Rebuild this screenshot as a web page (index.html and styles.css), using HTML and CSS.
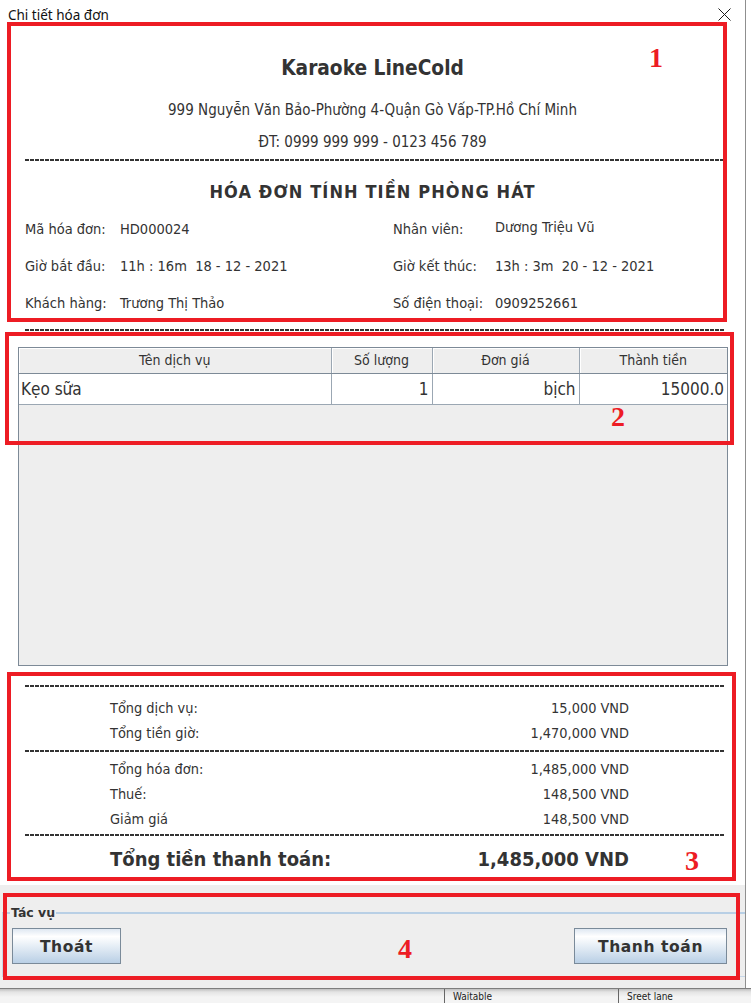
FILE: index.html
```html
<!DOCTYPE html>
<html lang="vi">
<head>
<meta charset="utf-8">
<title>Chi tiết hóa đơn</title>
<link rel="stylesheet" href="styles.css">
</head>
<body>
<div class="screen">
  <div class="window">
    <div class="titlebar">
      <span class="title">Chi tiết hóa đơn</span>
      <svg class="close" width="13" height="13" viewBox="0 0 13 13"><path d="M0.5 0.5L12.5 12.5M12.5 0.5L0.5 12.5" stroke="#1a1a1a" stroke-width="1"/></svg>
    </div>
    <div class="sheet">
      <div class="brand">Karaoke LineCold</div>
      <div class="line">999 Nguyễn Văn Bảo-Phường 4-Quận Gò Vấp-TP.Hồ Chí Minh</div>
      <div class="line">ĐT: 0999 999 999 - 0123 456 789</div>
      <div class="dash dash-head"></div>
      <div class="doc-title">HÓA ĐƠN TÍNH TIỀN PHÒNG HÁT</div>
      <div class="info">
        <span>Mã hóa đơn:</span><span>HD000024</span><span>Nhân viên:</span><span class="raised">Dương Triệu Vũ</span>
        <span>Giờ bắt đầu:</span><span>11h : 16m&nbsp; 18 - 12 - 2021</span><span>Giờ kết thúc:</span><span>13h : 3m&nbsp; 20 - 12 - 2021</span>
        <span>Khách hàng:</span><span>Trương Thị Thảo</span><span>Số điện thoại:</span><span>0909252661</span>
      </div>
      <div class="dash dash-info"></div>
      <div class="table-panel">
        <table class="grid">
          <colgroup><col class="c1"><col class="c2"><col class="c3"><col class="c4"></colgroup>
          <thead>
            <tr><th>Tên dịch vụ</th><th>Số lượng</th><th>Đơn giá</th><th>Thành tiền</th></tr>
          </thead>
          <tbody>
            <tr><td>Kẹo sữa</td><td class="num">1</td><td class="num">bịch</td><td class="num">15000.0</td></tr>
          </tbody>
        </table>
      </div>
      <div class="dash dash-sum1"></div>
      <div class="sum-group">
        <div class="sum-row"><span>Tổng dịch vụ:</span><span>15,000 VND</span></div>
        <div class="sum-row"><span>Tổng tiền giờ:</span><span>1,470,000 VND</span></div>
      </div>
      <div class="dash dash-sum2"></div>
      <div class="sum-group">
        <div class="sum-row"><span>Tổng hóa đơn:</span><span>1,485,000 VND</span></div>
        <div class="sum-row"><span>Thuế:</span><span>148,500 VND</span></div>
        <div class="sum-row"><span>Giảm giá</span><span>148,500 VND</span></div>
      </div>
      <div class="dash dash-sum3"></div>
      <div class="sum-row total"><span>Tổng tiền thanh toán:</span><span>1,485,000 VND</span></div>
    </div>
    <div class="footer">
      <fieldset class="actions">
        <legend>Tác vụ</legend>
        <button class="btn btn-exit" type="button">Thoát</button>
        <button class="btn btn-pay" type="button">Thanh toán</button>
      </fieldset>
    </div>
  </div>
  <div class="behind">
    <div class="bcell bc1"></div>
    <div class="bcell bc2">Waitable</div>
    <div class="bcell bc3">Sreet lane</div>
  </div>

  <div class="mark m1"></div>
  <div class="mark m2"></div>
  <div class="mark m3"></div>
  <div class="mark m4"></div>
  <span class="num-mark n1">1</span>
  <span class="num-mark n2">2</span>
  <span class="num-mark n3">3</span>
  <span class="num-mark n4">4</span>
</div>
</body>
</html>
```
FILE: styles.css
```css
* { box-sizing: border-box; }
html, body { margin: 0; padding: 0; background: #ffffff; }
body { width: 751px; height: 1003px; overflow: hidden; }

.screen {
  position: relative;
  width: 751px;
  height: 1003px;
  font-family: "DejaVu Sans Condensed", "DejaVu Sans", sans-serif;
  font-stretch: condensed;
  color: #333333;
}

.window {
  width: 746px;
  height: 988px;
  border-right: 1px solid #8f8f8f;
  display: flex;
  flex-direction: column;
  background: #ffffff;
}

.titlebar {
  height: 30px;
  display: flex;
  align-items: center;
  justify-content: space-between;
  padding: 0 14px 0 8px;
}
.title {
  font-family: "Noto Sans", sans-serif;
  font-stretch: normal;
  font-size: 13.5px;
  color: #111;
  margin-top: -1px;
}
.close { display: block; margin-top: -2px; }

.sheet {
  height: 855px;
  display: flex;
  flex-direction: column;
  background: #ffffff;
}

.brand {
  margin-top: 22px;
  height: 32px;
  line-height: 32px;
  text-align: center;
  font-size: 20.7px;
  font-weight: bold;
}
.line {
  height: 32px;
  line-height: 32px;
  text-align: center;
  font-size: 15px;
}
.brand + .line { margin-top: 10px; }

.dash {
  height: 2px;
  margin: 0 21px 0 25px;
  background: repeating-linear-gradient(to right, #333 0, #333 4px, transparent 4px, transparent 5px);
}
.dash-head { margin-top: 1px; }
.dash-info { margin-top: 8px; }
.dash-sum1 { margin-top: 19px; }
.dash-sum2 { margin-top: 5px; }
.dash-sum3 { margin-top: 3px; }

.doc-title {
  margin-top: 15px;
  height: 32px;
  line-height: 32px;
  text-align: center;
  font-size: 18px;
  font-weight: bold;
  letter-spacing: 1.1px;
}

.info {
  margin-top: 2px;
  padding-left: 25px;
  display: grid;
  grid-template-columns: 95px 273px 102px 1fr;
  grid-auto-rows: 37px;
  align-items: center;
  font-size: 14.5px;
}
.raised { margin-bottom: 4px; }

.table-panel {
  margin: 16px 17px 0 18px;
  height: 319px;
  border: 1px solid #7d8a97;
  background: #eeeeee;
}
.grid {
  width: 100%;
  border-collapse: collapse;
  table-layout: fixed;
}
.c1 { width: 312px; }
.c2 { width: 101px; }
.c3 { width: 147px; }
.c4 { width: auto; }
.grid th {
  height: 25px;
  padding: 0;
  font-weight: normal;
  font-size: 14px;
  text-align: center;
  background: #eeeeee;
  border-right: 1px solid #9ba7b3;
  border-bottom: 1px solid #7d8a97;
  box-shadow: inset 1px 1px 0 #ffffff;
}
.grid th:last-child { border-right: none; }
.grid td {
  height: 31px;
  padding: 0 3px 0 2px;
  font-size: 17px;
  background: #ffffff;
  border-right: 1px solid #9ba7b3;
  border-bottom: 1px solid #9ba7b3;
  white-space: nowrap;
}
.grid td:last-child { border-right: none; }
.grid td.num { text-align: right; }

.sum-group { display: flex; flex-direction: column; }
.dash-sum1 + .sum-group { margin-top: 8px; }
.dash-sum2 + .sum-group { margin-top: 4px; }
.sum-row {
  height: 25px;
  display: flex;
  align-items: center;
  justify-content: space-between;
  padding: 0 116px 0 110px;
  font-size: 14.4px;
}
.sum-row.total {
  margin-top: 8px;
  height: 30px;
  font-size: 20px;
  font-weight: bold;
}

.footer {
  flex: 1;
  background: #eeeeee;
  padding-top: 20px;
}
.actions {
  margin: 0 0 0 2px;
  padding: 7px 18px 12px 9px;
  border: 1px solid #c7d7e8;
  border-top: 2px solid #b8cfe5;
  border-right: none;
  display: flex;
  justify-content: space-between;
  align-items: flex-start;
}
.actions legend {
  padding: 0 1px;
  margin-left: -2px;
  font-family: "DejaVu Sans", sans-serif;
  font-stretch: normal;
  font-size: 12.5px;
  font-weight: bold;
  line-height: 16px;
  color: #333;
}
.btn {
  height: 36px;
  border: 1px solid #7a8a99;
  background: linear-gradient(to bottom, #dfe8f2 0%, #ffffff 22%, #e6eef6 50%, #b9cfe5 100%);
  font-family: "DejaVu Sans", sans-serif;
  font-stretch: normal;
  font-size: 15.5px;
  font-weight: bold;
  color: #333;
  letter-spacing: 0.6px;
  padding: 2px 0 0 0;
}
.btn-exit { width: 109px; }
.btn-pay { width: 153px; }

.behind {
  height: 15px;
  display: flex;
  border-top: 1px solid #7d7d7d;
  background: linear-gradient(to bottom, #bfbfbf 0, #e4e4e4 3px, #f4f4f4 8px);
  font-family: "DejaVu Sans", sans-serif;
  font-size: 10px;
  color: #222;
  overflow: hidden;
}
.bcell { height: 100%; padding: 2px 0 0 8px; line-height: 12px; white-space: nowrap; overflow: hidden; }
.bc1 { width: 444px; }
.bc2 { width: 174px; border-left: 1px solid #666; }
.bc3 { flex: 1; border-left: 1px solid #666; }

.mark {
  position: absolute;
  border: 4px solid #ed1c24;
  pointer-events: none;
}
.m1 { left: 7px; top: 22px; width: 720px; height: 300px; }
.m2 { left: 5px; top: 332px; width: 729px; height: 113px; }
.m3 { left: 7px; top: 672px; width: 729px; height: 209px; }
.m4 { left: 3px; top: 893px; width: 737px; height: 87px; }

.num-mark {
  position: absolute;
  font-family: "Liberation Serif", serif;
  font-stretch: normal;
  font-weight: bold;
  font-size: 28px;
  line-height: 28px;
  color: #ed1c24;
}
.n1 { left: 649px; top: 44px; }
.n2 { left: 611px; top: 403px; }
.n3 { left: 685px; top: 847px; }
.n4 { left: 398px; top: 935px; }
```
